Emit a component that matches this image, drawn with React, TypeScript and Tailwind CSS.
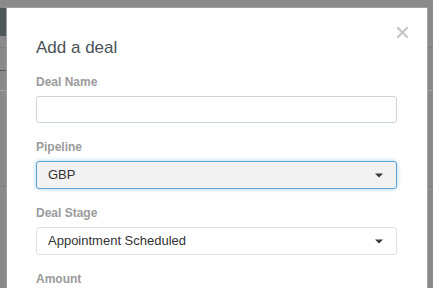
import React from "react";

function Caret() {
  return (
    <svg width="8" height="5" viewBox="0 0 8 5" className="shrink-0">
      <path d="M0 0.5 L8 0.5 L4 4.5 Z" fill="#3a3a3a" />
    </svg>
  );
}

function Field({ label, children }: { label: string; children: React.ReactNode }) {
  return (
    <div className="flex flex-col mb-4">
      <label className="text-[12px] leading-4 font-bold text-[#9b9b9b] mb-[6px]">{label}</label>
      {children}
    </div>
  );
}

export default function App() {
  return (
    <div
      className="relative w-[433px] h-[288px] overflow-hidden bg-[#8a8a8a]"
      style={{ fontFamily: '"Liberation Sans", Arial, sans-serif' }}
    >
      {/* dimmed page behind the modal */}
      <div className="flex flex-col">
        <div className="h-[8px]" />
        <div className="h-[28px] flex">
          <div className="w-[20px] bg-[#4f5659]" />
        </div>
        <div className="h-[11px]" />
        <div className="h-px bg-[#7d7d7d]" />
        <div className="h-[22px]" />
        <div className="h-px w-[6px] border-t border-dashed border-[#555]" />
        <div className="h-[19px]" />
        <div className="h-px bg-[#a2a2a2]" />
        <div className="h-[95px]" />
        <div className="h-px bg-[#7c7c7c]" />
      </div>

      {/* modal */}
      <div className="absolute left-[6px] top-[7px] w-[422px] h-[300px] bg-white border border-[#9e9e9e] border-r-[#a4a4a4] pl-[29px] pr-[30px] pt-[28px]">
        <button className="absolute right-[19px] top-[18px] w-[12px] h-[12px] flex items-center justify-center">
          <svg width="11" height="11" viewBox="0 0 11 11">
            <path d="M1 1 L10 10 M10 1 L1 10" stroke="#c9c9c9" strokeWidth="2.4" strokeLinecap="square" />
          </svg>
        </button>

        <h2 className="text-[17px] leading-6 text-[#4a5257] mb-[14px]">Add a deal</h2>

        <Field label="Deal Name">
          <div className="h-[27px] rounded-[3px] border border-[#ccd4d8] bg-white" />
        </Field>

        <Field label="Pipeline">
          <div className="h-[28px] rounded-[3px] border border-[#5ea6d9] bg-[#f2f2f2] shadow-[0_0_4px_rgba(94,166,217,0.55)] flex items-center justify-between pl-[11px] pr-[13px]">
            <span className="text-[13px] text-[#333]">GBP</span>
            <Caret />
          </div>
        </Field>

        <Field label="Deal Stage">
          <div className="h-[28px] rounded-[3px] border border-[#e2e2e2] bg-white flex items-center justify-between pl-[11px] pr-[13px]">
            <span className="text-[13px] text-[#333]">Appointment Scheduled</span>
            <Caret />
          </div>
        </Field>

        <Field label="Amount">
          <div className="h-[27px]" />
        </Field>
      </div>
    </div>
  );
}
